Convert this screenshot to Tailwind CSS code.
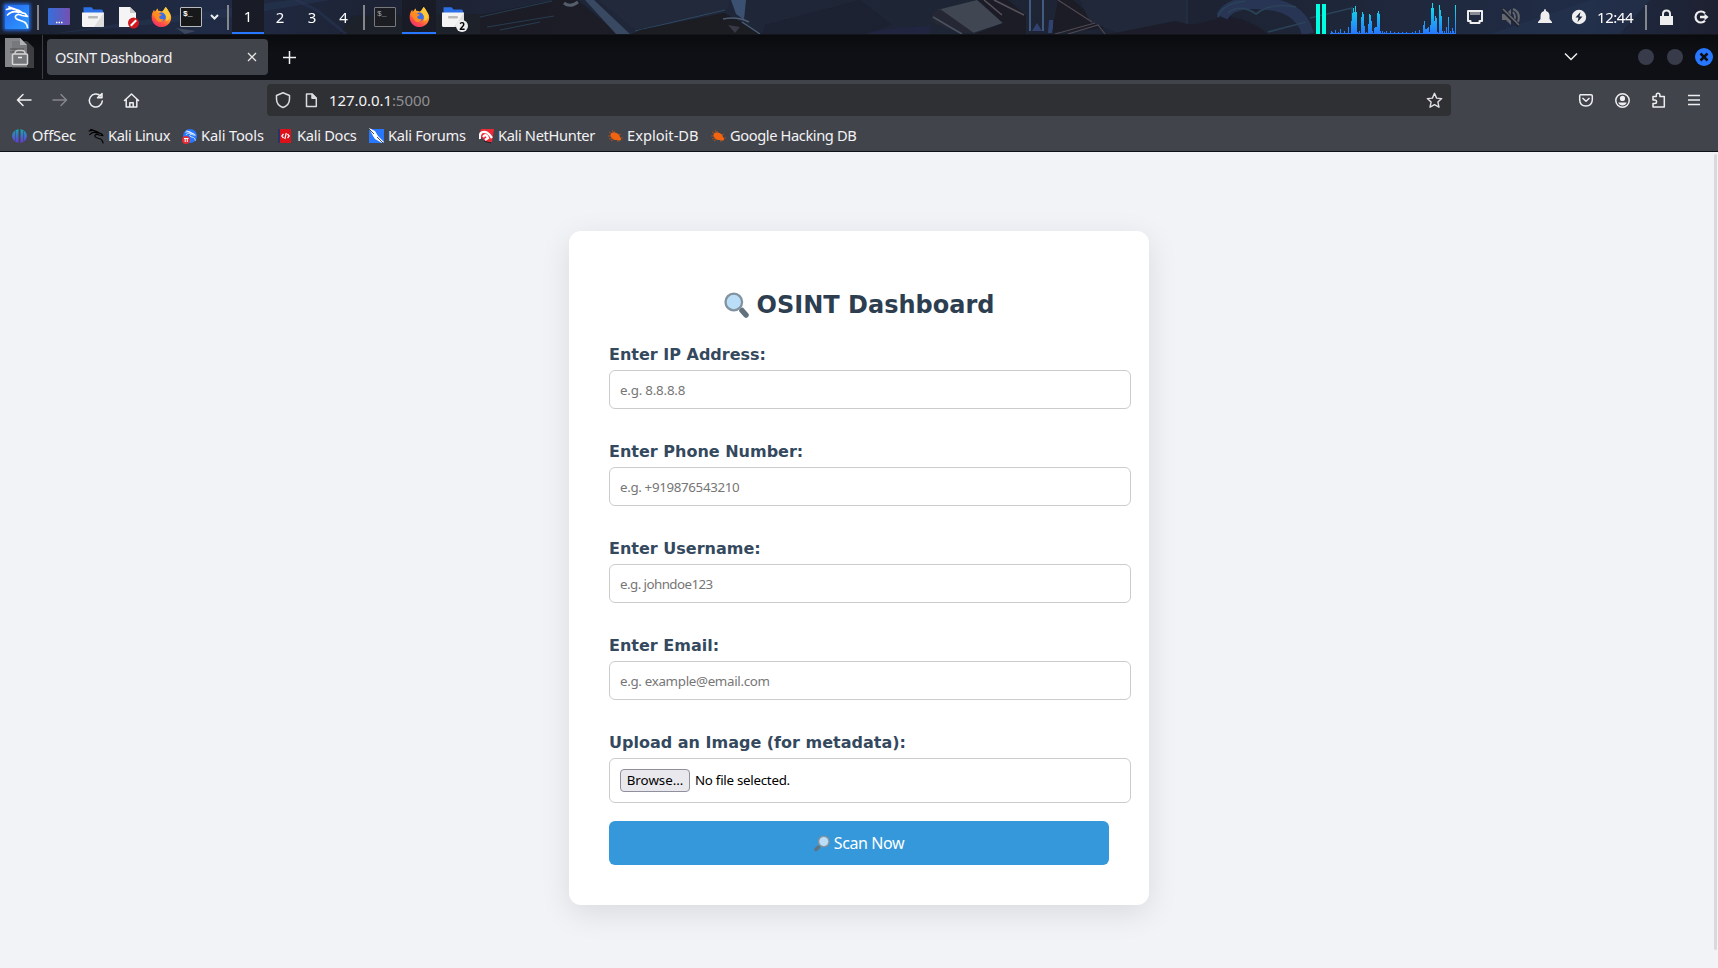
<!DOCTYPE html>
<html lang="en">
<head>
<meta charset="utf-8">
<title>OSINT Dashboard</title>
<script src="https://cdn.jsdelivr.net/npm/@tailwindcss/browser@4"></script>
</head>
<body class="w-[1718px] h-[968px] overflow-hidden flex flex-col bg-[#f2f3f7] font-['Noto_Sans',sans-serif]">

<svg class="absolute size-0">
  <defs>
    <linearGradient id="ffo" x1="0.8" y1="0" x2="0.2" y2="1"><stop offset="0" stop-color="#ffe04a"/><stop offset=".45" stop-color="#ff9328"/><stop offset=".75" stop-color="#ff4a4a"/><stop offset="1" stop-color="#e82f75"/></linearGradient>
    <linearGradient id="graph" x1="0" y1="0" x2="0" y2="1"><stop offset="0" stop-color="#10e8e8"/><stop offset="1" stop-color="#2777ff"/></linearGradient>
    <linearGradient id="desk" x1="0" y1="0" x2="1" y2="0"><stop offset="0" stop-color="#366fdc"/><stop offset="1" stop-color="#7550b0"/></linearGradient>
    <linearGradient id="kali" x1="0" y1="0" x2="1" y2="1"><stop offset="0" stop-color="#2468f0"/><stop offset="1" stop-color="#2f9bff"/></linearGradient>
    <linearGradient id="off" x1="0" y1="0" x2="0" y2="1"><stop offset="0" stop-color="#12aab0"/><stop offset="1" stop-color="#6a35e0"/></linearGradient>
    <filter id="glow" x="-30%" y="-30%" width="160%" height="160%"><feGaussianBlur stdDeviation="1.500"/></filter>
  </defs>
  <symbol id="firefox" viewBox="0 0 22 22">
    <path fill="url(#ffo)" d="M15.500 .5C18 3 17.500 4.500 19.500 6.500C21.800 9.500 21.600 13.500 19.800 16.500C17.500 20.300 14 21.500 11 21.500C6 21.500 1.500 18 .8 12.500C.4 9 1.200 6 3.200 3.300L4 5.500C5 4.300 6 2.500 7 2L7.500 4.500C9 4.500 10 5 11 5.300C13 5 13.500 2.500 15.500 .5Z"/>
    <circle cx="11" cy="11" r="4.600" fill="#3b6fe8"/>
    <path fill="#ff8a1f" d="M1.500 8C4 6 8 6 9.500 8L11.500 8.500C11 10 9 10 8.500 11C9 13 11 14 13.500 13C12 17 7 17 5.500 14C4.500 11.500 3 10 1.500 8Z"/>
    <path fill="#ffc83a" d="M15.500 .5C17.500 3.500 20 6 20 11C19 14 17 15 15.500 15C17 11 15.500 8 13 6.500C12.500 4 14 3 15.500 .5Z"/>
  </symbol>
  <symbol id="folder" viewBox="0 0 22 20">
    <path fill="#2b6fe6" d="M1.500 .3H9.500L11.500 2.500H19.500Q21 2.500 21 4V7H1.500Z"/>
    <path fill="#f4f4f4" d="M0 5.500H22V18.500Q22 20 20.500 20H1.500Q0 20 0 18.500Z"/>
    <path fill="#dedede" d="M22 5.500V18.500Q22 20 20.500 20H12Z"/>
    <rect x="6" y="9" width="10" height="2.400" rx="1.200" fill="#b9b9b9"/>
  </symbol>
  <symbol id="dragon" viewBox="0 0 24 24">
    <path fill="none" stroke="currentColor" stroke-width="1.700" stroke-linecap="round" stroke-linejoin="round" d="M1.500 4.500C6 3 11 4 14 7L20 8.500L22.500 11.500L17 10.500C12 8 9 11 11 13.500C13 16 19 15 21 18.500Q22.500 20.500 22.500 22.500M2.500 10C6 6.500 10 6 13.500 7.500M4 2L14 5.500L17.500 8"/>
  </symbol>
  <symbol id="bug" viewBox="0 0 15 13">
    <path fill="none" stroke="#b9531d" stroke-width=".8" d="M1 2L6 5M0 6H5M3 11L6 9M6 1L8 5M13 4L9 6M15 8H11M10 12L9 9M4 0L6 4M1 9L5 8"/>
    <ellipse cx="7.200" cy="6.300" rx="5" ry="3.500" transform="rotate(24 7.200 6.300)" fill="#f2640f"/>
    <circle cx="11.300" cy="9" r="1.800" fill="#f2640f"/>
  </symbol>
</svg>

<!-- Desktop panel -->
<header class="relative h-[34px] shrink-0 bg-[#1e2230] overflow-hidden">
  <svg class="absolute inset-0" width="1718" height="34">
    <defs>
      <linearGradient id="w1" x1="0" y1="0" x2="1" y2="0"><stop offset="0" stop-color="#1a202e"/><stop offset=".12" stop-color="#202b46"/><stop offset=".22" stop-color="#1d2334"/><stop offset=".4" stop-color="#1f2738"/><stop offset=".7" stop-color="#1d2332"/><stop offset=".92" stop-color="#202c46"/><stop offset="1" stop-color="#1d2030"/></linearGradient>
      <filter id="soft"><feGaussianBlur stdDeviation=".7"/></filter>
    </defs>
    <rect width="1718" height="34" fill="url(#w1)"/>
    <g filter="url(#soft)" opacity=".9">
      <path d="M50 34L230 17L330 0H290L170 16Z" fill="#293552" opacity=".6"/>
      <path d="M176 28L196 31L185 34Z" fill="#596070" opacity=".6"/>
      <path d="M340 34L352 16L480 14V34Z" fill="#1c202c"/>
      <path d="M296 0L318 11L346 34" stroke="#2c3a5a" stroke-width="3" fill="none" opacity=".5"/>
      <path d="M480 15L555 0H578L618 34H480Z" fill="#1b1d28"/>
      <path d="M480 17L552 1M487 27L554 16M500 30L540 22" stroke="#284052" fill="none"/>
      <path d="M585 0H594L630 34H616Z" fill="#3c4e68"/>
      <path d="M564 3Q570 8 578 2" stroke="#5c6672" stroke-width="3" fill="none"/>
      <path d="M598 0H730L728 9L635 30Z" fill="#212a3e"/>
      <path d="M635 31L725 10M640 30L655 34" stroke="#344c65" fill="none"/>
      <path d="M632 34L640 30L724 13L762 34Z" fill="#1a1b24"/>
      <path d="M731 0H746L744 20L736 14Z" fill="#40567a"/>
      <path d="M723 19Q737 16 749 22M742 22L760 34" stroke="#52647a" stroke-width="1.500" fill="none"/>
      <path d="M728 25L740 27L735 33Z" fill="#3a3b46"/>
      <path d="M765 25L860 0L892 25L866 34H762Z" fill="#1e2030"/>
      <path d="M866 34Q880 28 930 26V34Z" fill="#222842"/>
      <path d="M937 10L977 0L1003 23L973 33Z" fill="#454b57"/>
      <path d="M932 13L940 9L974 33H960L931 22Z" fill="#282a34"/>
      <path d="M933 17L962 34" stroke="#505868" stroke-width="1.500"/>
      <path d="M978 0H1008L1026 15V34H975L1003 23Z" fill="#1c1c26"/>
      <path d="M984 0L1002 15M994 0L1024 15" stroke="#5e5860" stroke-width="1.500"/>
      <path d="M1030 0V31M1043 0V31" stroke="#47608a" stroke-width="2"/>
      <path d="M1032 31L1037 23L1042 31ZM1049 20H1053V33H1048Z" fill="#354778"/>
      <path d="M1058 0H1073L1104 28L1052 33Z" fill="#1b1c26"/>
      <path d="M1080 0H1187V23L1120 34L1090 22Z" fill="#202b3b"/>
      <path d="M1055 34L1095 23M1068 34L1098 25L1105 34M1058 0L1092 22" stroke="#574d55" stroke-width="1.200" fill="none"/>
      <path d="M1187 0V24" stroke="#293c50"/>
      <path d="M1110 34L1175 21L1192 25L1228 16Q1252 20 1268 34Z" fill="#1f1d2a"/>
      <path d="M1222 17Q1228 4 1252 3Q1300 2 1308 34" stroke="#2b3759" stroke-width="12" fill="none"/>
      <path d="M1218 17Q1222 4 1245 1M1228 13Q1240 3 1256 14Q1270 2 1296 7M1268 32L1306 22M1310 18L1352 8V34" stroke="#2d475d" stroke-width="1.700" fill="none"/>
      <path d="M1490 34L1590 0H1650L1620 34Z" fill="#243454" opacity=".55"/>
    </g>
  </svg>
  <div class="relative flex h-[34px] items-center text-[15px] text-white">
    <svg class="shrink-0" width="48" height="34"><rect x="3" y="3" width="28" height="28" rx="3" fill="#2777ff" opacity=".7" filter="url(#glow)"/><rect x="5" y="5" width="24" height="24" rx="1" fill="url(#kali)"/><use href="#dragon" x="5" y="5" width="24" height="24" class="text-white"/><rect x="37" y="5" width="2" height="25" fill="#84868c"/></svg>
    <svg class="shrink-0" width="34" height="34"><rect y="8" width="22" height="17" rx="1" fill="url(#desk)"/><path d="M8 22.500h1.500m1 0h1.500m1 0h1.500" stroke="#fff" stroke-width="1.500"/></svg>
    <svg class="shrink-0" width="36" height="34"><use href="#folder" y="7" width="22" height="20"/></svg>
    <svg class="shrink-0" width="33" height="34"><path d="M1 7H12L18 13V27H1Z" fill="#f4f4f4"/><path d="M12 7L18 13H12Z" fill="#c8c8c8"/><circle cx="15.500" cy="23" r="5.500" fill="#d1181c"/><path d="M12.800 25.700L18.200 20.300" stroke="#fff" stroke-width="2"/></svg>
    <svg class="shrink-0" width="29" height="34"><use href="#firefox" y="6" width="21" height="22"/></svg>
    <div class="h-[20px] w-[22px] shrink-0 rounded-[1px] border border-[#b9babc] bg-[#171819] pl-[2px] pt-[1px] font-['Liberation_Mono',monospace] text-[8px] leading-[9px] font-bold">$_</div>
    <svg class="shrink-0" width="30" height="34"><path d="M9 15l3.500 3.500L16 15" fill="none" stroke="#eee" stroke-width="2"/><rect x="25" y="5" width="2" height="25" fill="#84868c"/></svg>
    <div class="flex h-full w-[32px] justify-center border-b-2 border-[#2777ff] bg-[#191b27] leading-[33px]">1</div>
    <div class="w-[32px] text-center leading-[33px]">2</div>
    <div class="w-[32px] text-center leading-[33px]">3</div>
    <div class="w-[31px] text-center leading-[33px]">4</div>
    <div class="ml-[4px] h-[25px] w-[2px] bg-[#84868c]"></div>
    <div class="ml-[9px] h-[20px] w-[22px] shrink-0 rounded-[1px] border border-[#77797d] bg-[#1c1d22] pl-[2px] pt-[1px] font-['Liberation_Mono',monospace] text-[8px] leading-[9px] text-[#aaa]">$_</div>
    <div class="ml-[6px] flex h-full w-[34px] justify-center border-b-2 border-[#2777ff] bg-[#191b27] pt-[6px]"><svg width="21" height="22"><use href="#firefox" width="21" height="22"/></svg></div>
    <div class="relative ml-[6px] h-[34px] w-[28px]"><svg width="22" height="34"><use href="#folder" y="7" width="22" height="20"/></svg><div class="absolute left-[14px] top-[20px] size-[12px] rounded-full bg-[#eee] text-center text-[10px] leading-[12px] font-bold text-black">2</div></div>
    <svg class="ml-auto shrink-0" width="150" height="34"><path d="M0 4h4v30h-4zM6 4h4v30h-4z" fill="#00ffe1"/><path id="load" fill="url(#graph)"/></svg>
    <svg class="shrink-0" width="36" height="34"><path d="M2 11H16V21H13.500V23H4.500V21H2Z" fill="none" stroke="#eee" stroke-width="2" stroke-linejoin="round"/><path d="M5 12v3m2-3v3m2-3v3m2-3v3m2-3v3" stroke="#eee"/></svg>
    <svg class="shrink-0" width="36" height="34"><path d="M0 14H4L9 9V25L4 20H0Z" fill="#65676d"/><path d="M11 12Q15 17 11 22M11 9Q19 12 16 22" fill="none" stroke="#65676d" stroke-width="2"/><path d="M0 9L17 26" stroke="#1e2434" stroke-width="4"/><path d="M1 9L17 25" stroke="#65676d" stroke-width="1.700"/></svg>
    <svg class="shrink-0" width="34" height="34"><path d="M7 9Q8 9 8 11Q11.500 12 11.500 16V19L14 22V23H0V22L2.500 19V16Q2.500 12 6 11Q6 9 7 9Z" fill="#eee"/></svg>
    <svg class="shrink-0" width="25" height="34"><circle cx="7" cy="17" r="7.200" fill="#eee"/><path d="M8.500 12L3.500 17.500H6.500L5.500 22L10.500 16.500H7.500Z" fill="#1d2740"/></svg>
    <div class="w-[48px] text-[15px] leading-[33px] tracking-[-0.45px]">12:44</div>
    <svg class="shrink-0" width="73" height="34"><rect y="5" width="2" height="25" fill="#84868c"/><path d="M16 16H28V25H15V16Z" fill="#eee"/><path d="M18 17V14Q18 10.500 21.500 10.500T25 14V17" fill="none" stroke="#eee" stroke-width="2"/><path d="M60 13.200A5.500 5.500 0 1 0 60 20.800" fill="none" stroke="#eee" stroke-width="2.200"/><path d="M55 17H61" stroke="#eee" stroke-width="2.500"/><path d="M59.500 13.500L63.500 17L59.500 20.500Z" fill="#eee"/></svg>
  </div>
</header>

<!-- Tab strip -->
<div class="flex h-[46px] shrink-0 items-center border-t border-[#14161b] bg-linear-to-b from-[#0a0b0e] to-[#0f1015] to-40%">
  <svg class="shrink-0" width="47" height="45"><path d="M5 3H20L27 10V32H5Z" fill="#85868a"/><path d="M20 6H27L34 13V33H12V6Z" fill="#6b6c6f" opacity=".5"/><path d="M20 3L27 10H20Z" fill="#b0b1b4"/><path d="M10 14H24M10 17H24" stroke="#4e4f53"/><path d="M15 18.500Q15 15.500 18 15.500H22Q25 15.500 25 18.500" fill="none" stroke="#ccc" stroke-width="1.500"/><rect x="12.500" y="19" width="15" height="10.500" rx="1" fill="#747578" stroke="#d7d7d7" stroke-width="1.500"/><path d="M18 22.500h4" stroke="#eee" stroke-width="1.500"/><rect x="42" width="1" height="44" fill="#3d3e43"/></svg>
  <div class="mb-px flex h-[36px] w-[221px] shrink-0 items-center justify-between rounded-[4px] bg-[#42444c] pl-[8px] pr-[11px] text-[14.667px] text-[#f0f0f2]">
    <span class="pb-px tracking-[-0.43px] whitespace-nowrap">OSINT Dashboard</span>
    <svg width="10" height="10"><path d="M1 1L9 9M9 1L1 9" stroke="#e5e5e5" stroke-width="1.300"/></svg>
  </div>
  <svg class="ml-[15px]" width="13" height="13"><path d="M6.500 0V13M0 6.500H13" stroke="#f0f0f0" stroke-width="1.500"/></svg>
  <svg class="ml-auto shrink-0" width="154" height="45"><path d="M1 18.500L7 24.500L13 18.500" fill="none" stroke="#eee" stroke-width="1.500"/><circle cx="82" cy="22" r="8" fill="#383c4a"/><circle cx="111" cy="22" r="8" fill="#383c4a"/><circle cx="140" cy="22" r="9" fill="#2777ff"/><path d="M136.500 18.500L143.500 25.500M143.500 18.500L136.500 25.500" stroke="#0d0e12" stroke-width="2.500"/></svg>
</div>

<!-- Navigation toolbar -->
<div class="flex h-[40px] shrink-0 items-center bg-[#42444c]">
  <svg class="shrink-0" width="267" height="40" fill="none" stroke="#eeeef0" stroke-width="1.500" stroke-linejoin="round" stroke-linecap="round">
    <path d="M31 20H17.500M23 14.500L17.500 20L23 25.500"/>
    <path d="M53 20H66.500M61 14.500L66.500 20L61 25.500" stroke="#85868b"/>
    <path d="M100.500 16A6.500 6.500 0 1 0 102.300 21M102 13.500V17.800H97.500Z"/>
    <path d="M124.500 20.500L131.500 14L138.500 20.500M126.200 19.500V27H136.800V19.500M129.800 27V22.700H133.200V27"/>
  </svg>
  <div class="flex h-[32px] w-[1184px] shrink-0 items-center rounded-[4px] bg-[#2f3034]">
    <svg class="shrink-0" width="62" height="32" fill="none" stroke="#dcdcde" stroke-width="1.500" stroke-linejoin="round"><path d="M16 8.800L22.500 11.500V15C22.500 19.500 20 22 16 23.500C12 22 9.500 19.500 9.500 15V11.500Z"/><path d="M39.500 10H45L49.300 14.300V22.500H39.500Z"/><path d="M45 10V14.300H49.300Z" fill="#dcdcde"/></svg>
    <div class="text-[15px] leading-[32px] tracking-[-0.07px] whitespace-nowrap text-[#f4f4f5]">127.0.0.1<span class="text-[#8e8f92]">:5000</span></div>
    <svg class="ml-auto mr-[8px]" width="17" height="17" viewBox="0 0 17 17"><path d="M8.500 1.300L10.600 6.100L15.700 6.600L11.900 10.100L13 15.200L8.500 12.600L4 15.200L5.100 10.100L1.300 6.600L6.400 6.100Z" fill="none" stroke="#e0e0e2" stroke-width="1.400" stroke-linejoin="round"/></svg>
  </div>
  <svg class="ml-auto shrink-0" width="141" height="40" fill="none" stroke="#eeeef0" stroke-width="1.500" stroke-linejoin="round">
    <path d="M3.500 14.700H14Q15.300 14.700 15.300 16V20Q14.800 26 8.900 26Q3 26 2.700 20V16Q2.700 14.700 3.500 14.700ZM5.500 18L9 21.300L12.500 18"/>
    <circle cx="45.500" cy="20.500" r="6.700"/><circle cx="45.500" cy="18.400" r="2.600" fill="#eeeef0" stroke="none"/><path d="M41.200 22.500H49.800Q48.500 25.500 45.500 25.500T41.200 22.500Z" fill="#eeeef0" stroke="none"/>
    <path d="M76 16.500H79.300V15A1.800 1.800 0 0 1 82.900 15V16.500H87.300V27H76V23.500H77.800A1.700 1.700 0 0 0 77.800 20H76Z"/>
    <path d="M111 15.500H123M111 20H123M111 24.500H123"/>
  </svg>
</div>

<!-- Bookmarks -->
<div class="flex h-[31px] shrink-0 items-center bg-[#42444c] pl-[12px] text-[14.667px] leading-[28px] whitespace-nowrap text-[#f2f2f3]">
  <svg class="w-[20px] shrink-0" width="20" height="16"><path d="M6.500 1V15Q0 13 0 8T6.500 1ZM8.500 1V15Q15 13 15 8T8.500 1Z" fill="url(#off)"/><path d="M3.500 3V13M11.500 3V13" stroke="#42444c" stroke-width=".6"/></svg><span class="w-[56px] pb-[2px] tracking-[-0.15px]">OffSec</span>
  <svg class="shrink-0" width="20" height="16"><use href="#dragon" width="16" height="16" class="text-black"/></svg><span class="w-[74px] pb-[2px] tracking-[-0.4px]">Kali Linux</span>
  <svg class="shrink-0" width="19" height="16"><circle cx="8" cy="8" r="7" fill="#2777ff"/><use href="#dragon" x="2" y="2" width="13" height="11" class="text-white"/><circle cx="4" cy="12" r="4" fill="#e62b32"/><path d="M2 10.500H6.500M3.200 10.500V14M5.300 10.500V14" stroke="#fff"/></svg><span class="w-[77px] pb-[2px] tracking-[-0.15px]">Kali Tools</span>
  <svg class="shrink-0" width="19" height="16"><rect y="1" width="13" height="14" fill="#dd1118"/><rect y="1" width="2" height="14" fill="#26346c"/><path d="M5.500 6L3.800 8L5.500 10M9.500 6L11.200 8L9.500 10M8.300 5L6.800 11" fill="none" stroke="#fff" stroke-width="1.200"/></svg><span class="w-[72px] pb-[2px] tracking-[-0.3px]">Kali Docs</span>
  <svg class="shrink-0" width="19" height="16"><rect y="1" width="15" height="14" fill="#2777ff"/><path d="M0 0L6 3L9 8L15 14L13 15L6 11L4 8Z" fill="#fff"/><path d="M0 1L5 6M8 9L14 15" stroke="#222" stroke-width=".8"/></svg><span class="w-[91px] pb-[2px] tracking-[-0.3px]">Kali Forums</span>
  <svg class="shrink-0" width="19" height="16"><path d="M2 1H15L13 14H7L0 7Z" fill="#ed2936"/><path d="M1 11Q0 3 6 4Q9 4 13 10M4 9Q7 5 9 10L6 12" fill="none" stroke="#fff" stroke-width="2.300"/><path d="M5 13L12 15" stroke="#222"/></svg><span class="w-[110px] pb-[2px] tracking-[-0.36px]">Kali NetHunter</span>
  <svg class="shrink-0" width="19" height="16"><use href="#bug" y="2" width="15" height="13"/></svg><span class="w-[84px] pb-[2px]">Exploit-DB</span>
  <svg class="shrink-0" width="19" height="16"><use href="#bug" y="2" width="15" height="13"/></svg><span class="pb-[2px] tracking-[-0.4px]">Google Hacking DB</span>
</div>
<div class="h-[1px] shrink-0 bg-[#101116]"></div>

<!-- Page -->
<main class="relative flex flex-1 justify-center pt-[79px]">
  <section class="flex h-[674px] w-[580px] flex-col rounded-[12px] bg-white px-[40px] pt-[56px] shadow-[0_8px_30px_rgba(0,0,0,0.1)]">
    <h1 class="flex h-[36px] items-center justify-center gap-[8px] font-['DejaVu_Sans',sans-serif] text-[24px] leading-[36px] font-bold text-[#2c3e50]">
      <svg class="shrink-0" width="25" height="26" viewBox="0 0 25 26"><path d="M18 18.500L22 23" stroke="#62727c" stroke-width="5.500" stroke-linecap="round"/><circle cx="9.800" cy="10" r="8.300" fill="#bbdef8" stroke="#82939f" stroke-width="2.300"/></svg>
      <span>OSINT Dashboard</span>
    </h1>
    <form class="flex flex-col font-['DejaVu_Sans',sans-serif] text-[16px] font-bold text-[#34495e]">
      <label class="mt-[20px] h-[27px] w-fit leading-[23px]">Enter IP Address:</label>
      <input class="h-[39px] w-[522px] rounded-[6px] border border-[#ccc] px-[10px] font-['Noto_Sans',sans-serif] text-[13.333px] font-normal tracking-[-0.2px] placeholder:text-[#767676]" placeholder="e.g. 8.8.8.8">
      <label class="mt-[31px] h-[27px] w-fit leading-[23px]">Enter Phone Number:</label>
      <input class="h-[39px] w-[522px] rounded-[6px] border border-[#ccc] px-[10px] font-['Noto_Sans',sans-serif] text-[13.333px] font-normal tracking-[-0.34px] placeholder:text-[#767676]" placeholder="e.g. +919876543210">
      <label class="mt-[31px] h-[27px] w-fit leading-[23px]">Enter Username:</label>
      <input class="h-[39px] w-[522px] rounded-[6px] border border-[#ccc] px-[10px] font-['Noto_Sans',sans-serif] text-[13.333px] font-normal tracking-[-0.55px] placeholder:text-[#767676]" placeholder="e.g. johndoe123">
      <label class="mt-[31px] h-[27px] w-fit leading-[23px]">Enter Email:</label>
      <input class="h-[39px] w-[522px] rounded-[6px] border border-[#ccc] px-[10px] font-['Noto_Sans',sans-serif] text-[13.333px] font-normal tracking-[-0.31px] placeholder:text-[#767676]" placeholder="e.g. example@email.com">
      <label class="mt-[31px] h-[27px] w-fit leading-[23px]">Upload an Image (for metadata):</label>
      <div class="flex h-[45px] w-[522px] items-center gap-[5px] rounded-[6px] border border-[#ccc] px-[10px] font-['Noto_Sans',sans-serif] text-[13.333px] font-normal text-black">
        <span class="flex h-[23px] w-[70px] items-center justify-center rounded-[4px] border border-[#8f8f9d] bg-[#e9e9ed]">Browse…</span>
        <span class="tracking-[-0.27px]">No file selected.</span>
      </div>
      <button type="button" class="mt-[18px] flex h-[44px] w-[500px] items-center justify-center gap-[4px] rounded-[6px] bg-[#3498db] font-['Noto_Sans',sans-serif] text-[16px] font-normal tracking-[-0.4px] text-white">
        <svg width="16" height="17" viewBox="0 0 16 17"><path d="M4.500 12L2 14.500" stroke="#62727c" stroke-width="3.400" stroke-linecap="round"/><circle cx="9.800" cy="6.500" r="5.300" fill="#bbdef8" stroke="#82939f" stroke-width="1.500"/></svg>
        <span>Scan Now</span>
      </button>
    </form>
  </section>
  <div class="absolute top-[2px] left-[1714px] h-[796px] w-[3px] rounded-[2px] bg-[#d8d9dd]"></div>
</main>

<script>
  // CPU load samples: [x, height] in pixels, drawn on the panel graph
  const samples = [[15,3],[16,2],[19,4],[22,2],[24,5],[26,1],[28,3],[30,1],[32,7],[34,1],[35,13],[36,21],[37,26],[38,22],[39,28],[40,22],[41,2],[43,3],[45,17],[46,22],[47,20],[48,8],[50,2],[52,10],[53,20],[54,19],[55,13],[56,3],[58,6],[59,7],[60,7],[61,21],[62,23],[63,20],[64,3],[66,3],[68,2],[70,3],[72,1],[74,3],[76,1],[78,2],[80,1],[82,2],[84,1],[86,2],[88,1],[90,2],[92,1],[94,1],[96,2],[99,3],[101,1],[103,4],[107,9],[108,13],[109,5],[110,5],[111,6],[112,7],[113,2],[114,9],[115,26],[116,31],[117,26],[118,13],[119,18],[120,16],[121,2],[123,29],[124,24],[125,18],[126,3],[128,3],[130,7],[132,17],[134,3],[136,6],[137,3],[139,29]];
  document.getElementById('load').setAttribute('d', samples.map(([x,h]) => `M${x} ${34-h}h1v${h}h-1z`).join('') + 'M14 33h126v1h-126z');
</script>
</body>
</html>
